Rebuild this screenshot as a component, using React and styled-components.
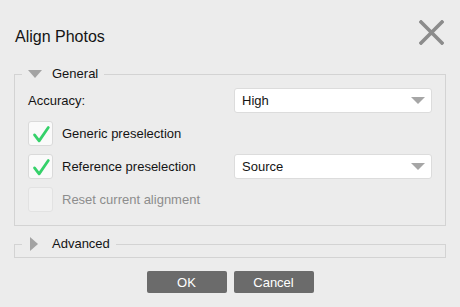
import styled, { createGlobalStyle } from "styled-components";

const Global = createGlobalStyle`
html, body { margin: 0; padding: 0; }
body {
    background: #ececec;
    font-family: "Liberation Sans", Arial, sans-serif;
    color: #141414;
}
`

const rows = [
    { label: "Generic preselection", checked: true },
    { label: "Reference preselection", checked: true, select: "Source" },
    { label: "Reset current alignment", disabled: true },
]

const CheckMark = () => (
    <svg width="25" height="25" viewBox="0 0 25 25">
        <polyline points="6,14 11,20.5 21,6" fill="none" stroke="#35d16a" strokeWidth="3" strokeLinecap="round" strokeLinejoin="round" />
    </svg>
)

const App = () => {
    return (
        <Dialog>
            <Global />
            <Header>
                <Title>Align Photos</Title>
                <CloseButton aria-label="Close">
                    <svg width="25" height="25" viewBox="0 0 25 25">
                        <path d="M2 2 L23 23 M23 2 L2 23" stroke="#8c8c8c" strokeWidth="3.6" strokeLinecap="square" />
                    </svg>
                </CloseButton>
            </Header>

            <Group>
                <Legend $offset={-6}>
                    <TriangleDown />
                    General
                </Legend>
                <Grid>
                    <Label>Accuracy:</Label>
                    <Select>High<Arrow /></Select>
                    {rows.map((r) => (
                        <Row key={r.label}>
                            <CheckLine $disabled={r.disabled}>
                                <Box $disabled={r.disabled}>{r.checked && <CheckMark />}</Box>
                                {r.label}
                            </CheckLine>
                            {r.select ? <Select>{r.select}<Arrow /></Select> : <span />}
                        </Row>
                    ))}
                </Grid>
            </Group>

            <Collapsed>
                <Legend $offset={7}>
                    <TriangleRight />
                    Advanced
                </Legend>
            </Collapsed>

            <Buttons>
                <Button>OK</Button>
                <Button>Cancel</Button>
            </Buttons>
        </Dialog>
    )
}

const Dialog = styled.div`
width: 460px;
height: 307px;
box-sizing: border-box;
background: #ececec;
display: flex;
flex-direction: column;
overflow: hidden;
`
const Header = styled.div`
display: flex;
justify-content: space-between;
align-items: flex-start;
padding: 20px 16px 0 15px;
height: 66px;
box-sizing: border-box;
`
const Title = styled.div`
font-size: 16px;
line-height: 20px;
margin-top: 7px;
`
const CloseButton = styled.div`
width: 25px;
height: 25px;
`
const Group = styled.fieldset`
margin: 0 14px;
padding: 6px 13px 13px;
min-width: 0;
border: 1px solid #d3d3d3;
`
const Collapsed = styled(Group)`
margin-top: 10px;
padding: 0 0 5px;
`
const Legend = styled.legend`
display: flex;
align-items: center;
gap: 10px;
padding: 0 6px;
margin-left: ${p => p.$offset}px;
font-size: 13px;
line-height: 16px;
`
const TriangleDown = styled.span`
width: 0;
height: 0;
border-left: 7px solid transparent;
border-right: 7px solid transparent;
border-top: 8px solid #a3a3a3;
`
const TriangleRight = styled.span`
width: 0;
height: 0;
margin: 0 4px 0 2px;
border-top: 7px solid transparent;
border-bottom: 7px solid transparent;
border-left: 8px solid #a3a3a3;
`
const Grid = styled.div`
display: grid;
grid-template-columns: 1fr 198px;
grid-auto-rows: 25px;
row-gap: 8px;
align-items: center;
`
const Row = styled.div`
display: contents;
`
const Label = styled.div`
font-size: 13px;
`
const CheckLine = styled.label`
display: flex;
align-items: center;
gap: 9px;
font-size: 13px;
color: ${p => p.$disabled ? "#8d8d8d" : "#141414"};
`
const Box = styled.span`
width: 25px;
height: 25px;
box-sizing: border-box;
border: 1px solid ${p => p.$disabled ? "#e2e2e2" : "#dadada"};
border-radius: 3px;
background: ${p => p.$disabled ? "#f1f1f1" : "#fafafa"};
display: flex;
align-items: center;
justify-content: center;
`
const Select = styled.div`
height: 25px;
box-sizing: border-box;
background: #fff;
border: 1px solid #dcdcdc;
border-radius: 3px;
display: flex;
align-items: center;
justify-content: space-between;
padding: 0 6px 0 7px;
font-size: 13px;
`
const Arrow = styled.span`
width: 0;
height: 0;
border-left: 7px solid transparent;
border-right: 7px solid transparent;
border-top: 7px solid #a6a6a6;
`
const Buttons = styled.div`
display: flex;
justify-content: center;
gap: 7px;
margin-top: 13px;
`
const Button = styled.button`
width: 80px;
height: 22px;
border: none;
border-radius: 2px;
background: #6b6b6b;
color: #fff;
font-family: inherit;
font-size: 13px;
padding: 0;
`

export default App;
